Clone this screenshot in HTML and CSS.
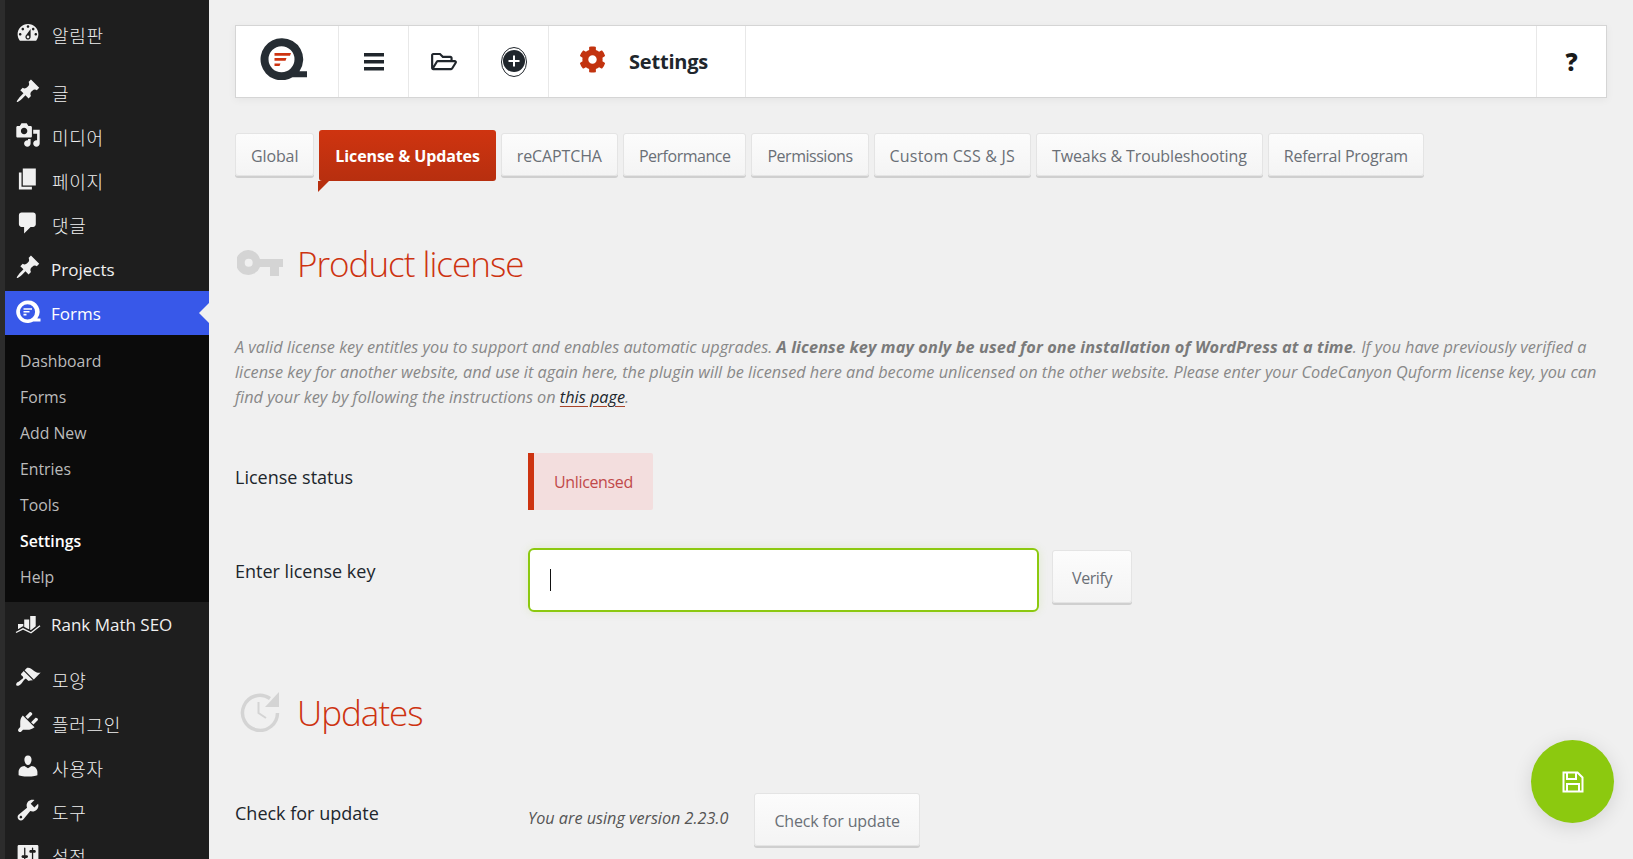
FILE: index.html
```html
<!DOCTYPE html>
<html lang="ko">
<head>
    <meta charset="UTF-8">
    <meta name="viewport" content="width=device-width, initial-scale=1.0">
    <title>Settings - Forms</title>
    <link rel="stylesheet" href="styles.css">
</head>
<body>
    <div class="edge"></div>

    <div class="sidebar">
        <a class="menu-item menu-sep"><svg class="menu-icon" viewBox="0 0 20 20"><path fill-rule="evenodd" d="M3.76 16h12.48c1.1-1.37 1.76-3.11 1.76-5 0-4.42-3.58-8-8-8s-8 3.58-8 8c0 1.89.66 3.63 1.76 5zM10 4c.55 0 1 .45 1 1s-.45 1-1 1-1-.45-1-1 .45-1 1-1zM6 6c.55 0 1 .45 1 1s-.45 1-1 1-1-.45-1-1 .45-1 1-1zm8 0c.55 0 1 .45 1 1s-.45 1-1 1-1-.45-1-1 .45-1 1-1zm-5.37 5.55L12 7v6c0 1.1-.9 2-2 2s-2-.9-2-2c0-.57.24-1.08.63-1.45zM4 10c.55 0 1 .45 1 1s-.45 1-1 1-1-.45-1-1 .45-1 1-1zm12 0c.55 0 1 .45 1 1s-.45 1-1 1-1-.45-1-1 .45-1 1-1zm-5 3c0-.55-.45-1-1-1s-1 .45-1 1 .45 1 1 1 1-.45 1-1z"/></svg><span class="ko">알림판</span></a>
        <a class="menu-item"><svg class="menu-icon" viewBox="0 0 20 20"><path d="M10.44 3.02l1.82-1.82 6.36 6.35-1.83 1.82c-1.05-.68-2.48-.57-3.41.36l-.75.75c-.92.93-1.04 2.35-.35 3.41l-1.83 1.82-2.41-2.41-2.8 2.79c-.42.42-3.38 2.71-3.8 2.29s1.86-3.39 2.28-3.81l2.79-2.79L4.1 9.36l1.83-1.82c1.05.69 2.48.57 3.4-.36l.75-.75c.93-.92 1.05-2.35.36-3.41z"/></svg><span class="ko">글</span></a>
        <a class="menu-item"><svg class="menu-icon" viewBox="0 0 20 20"><path fill-rule="evenodd" d="M13 11V4c0-.55-.45-1-1-1h-1.67L9 1H5L3.67 3H2c-.55 0-1 .45-1 1v7c0 .55.45 1 1 1h10c.55 0 1-.45 1-1zM7 4.5c1.38 0 2.5 1.12 2.5 2.5S8.38 9.5 7 9.5 4.5 8.38 4.5 7 5.62 4.5 7 4.5zM14 6h5v10.5c0 1.38-1.12 2.5-2.5 2.5S14 17.88 14 16.5s1.12-2.5 2.5-2.5c.17 0 .34.02.5.05V9h-3V6zm-4 8.05V13h2v3.5c0 1.38-1.12 2.5-2.5 2.5S7 17.88 7 16.5 8.12 14 9.5 14c.17 0 .34.02.5.05z"/></svg><span class="ko">미디어</span></a>
        <a class="menu-item"><svg class="menu-icon" viewBox="0 0 20 20"><path d="M6 15V2h10v13H6zm-1 1h8v2H3V5h2v11z"/></svg><span class="ko">페이지</span></a>
        <a class="menu-item"><svg class="menu-icon" viewBox="0 0 20 20"><path d="M5 2h9c1.1 0 2 .9 2 2v7c0 1.1-.9 2-2 2h-2l-5 5v-5H5c-1.1 0-2-.9-2-2V4c0-1.1.9-2 2-2z"/></svg><span class="ko">댓글</span></a>
        <a class="menu-item"><svg class="menu-icon" viewBox="0 0 20 20"><path d="M10.44 3.02l1.82-1.82 6.36 6.35-1.83 1.82c-1.05-.68-2.48-.57-3.41.36l-.75.75c-.92.93-1.04 2.35-.35 3.41l-1.83 1.82-2.41-2.41-2.8 2.79c-.42.42-3.38 2.71-3.8 2.29s1.86-3.39 2.28-3.81l2.79-2.79L4.1 9.36l1.83-1.82c1.05.69 2.48.57 3.4-.36l.75-.75c.93-.92 1.05-2.35.36-3.41z"/></svg>Projects</a>
        <a class="menu-item current">
            <svg class="menu-icon" viewBox="0 0 26 26"><path fill-rule="evenodd" d="M12.5 1.500a11.300 11.300 0 1 0 5.800 21H25.500v-3h-3.200A11.300 11.300 0 0 0 12.5 1.500zm0 3.700a7.600 7.600 0 1 1 0 15.200 7.600 7.600 0 0 1 0-15.200z"/><path d="M8.500 9.200h8.500v1.600H8.500zM8.500 12h6v1.600h-6zM8.500 14.800h3v1.600h-3z"/></svg>Forms
        </a>
        <div class="submenu">
            <a>Dashboard</a>
            <a>Forms</a>
            <a>Add New</a>
            <a>Entries</a>
            <a>Tools</a>
            <a class="on">Settings</a>
            <a>Help</a>
        </div>
        <a class="menu-item menu-sep-small"><svg class="menu-icon" viewBox="0 0 26 26"><path d="M3 15h5.300v5H3zM9.200 10.500h5v10h-5zM15.200 7h5.500v14h-5.500z"/><path fill="none" stroke="#1e1e1e" stroke-width="3" d="M2 22.500l6-3.500 8 4 9-7"/><path fill="none" stroke="#f0f0f0" stroke-width="1.400" d="M1 23.500l7-3.700 8 4 9-7"/></svg>Rank Math SEO</a>
        <a class="menu-item"><svg class="menu-icon" viewBox="0 0 20 20"><path d="M14.48 11.06L7.41 3.99l1.5-1.5c.5-.56 2.3-.47 3.51.32 1.21.8 1.43 1.28 2.91 2.1 1.18.64 2.45 1.26 4.45.85zm-.71.71L6.7 4.7 4.93 6.47c-.39.39-.39 1.02 0 1.41l1.06 1.06c.39.39.39 1.03 0 1.42-.6.6-1.43 1.11-2.21 1.69-.35.26-.7.53-1.01.84C1.43 13.23.4 14.89 1.2 15.7c.8.79 2.46-.23 3.78-1.55.31-.31.58-.66.85-1.02.57-.78 1.08-1.61 1.69-2.21.39-.39 1.02-.39 1.41 0l1.06 1.06c.39.39 1.02.39 1.41 0z"/></svg><span class="ko">모양</span></a>
        <a class="menu-item"><svg class="menu-icon" viewBox="0 0 20 20"><path d="M13.11 4.36L9.87 7.6 8 5.73l3.24-3.24c.35-.34 1.05-.2 1.56.32.52.51.66 1.21.31 1.55zm-8 1.77l.91-1.12 9.01 9.01-1.19.84c-.71.71-2.63 1.16-3.82 1.16H6.14L4.9 17.26c-.59.59-1.54.59-2.12 0-.59-.58-.59-1.53 0-2.12l1.24-1.24v-3.88c0-1.13.4-3.19 1.09-3.89zm7.26 3.97l3.24-3.24c.34-.35 1.04-.21 1.55.31.52.51.66 1.21.31 1.55l-3.24 3.25z"/></svg><span class="ko">플러그인</span></a>
        <a class="menu-item"><svg class="menu-icon" viewBox="0 0 20 20"><path d="M10 9.25c-2.27 0-2.73-3.44-2.73-3.44C7 4.02 7.82 2 9.97 2c2.16 0 2.98 2.02 2.71 3.81 0 0-.41 3.44-2.68 3.44zm0 2.57L12.72 10c2.39 0 4.52 2.33 4.52 4.53v2.49s-3.65 1.13-7.24 1.13c-3.65 0-7.24-1.13-7.24-1.13v-2.49c0-2.25 1.94-4.48 4.47-4.48z"/></svg><span class="ko">사용자</span></a>
        <a class="menu-item"><svg class="menu-icon" viewBox="0 0 20 20"><path fill-rule="evenodd" d="M16.68 9.77c-1.34 1.34-3.3 1.67-4.95.99l-5.41 6.52c-.99.99-2.59.99-3.58 0s-.99-2.59 0-3.57l6.52-5.42c-.68-1.65-.35-3.61.99-4.95 1.28-1.28 3.12-1.62 4.72-1.06l-2.89 2.89 2.82 2.82 2.86-2.87c.53 1.58.18 3.39-1.08 4.65zM3.81 16.21c.4.39 1.04.39 1.43 0 .4-.4.4-1.04 0-1.43-.39-.4-1.03-.4-1.43 0-.39.39-.39 1.03 0 1.43z"/></svg><span class="ko">도구</span></a>
        <a class="menu-item"><svg class="menu-icon" viewBox="0 0 20 20"><path fill-rule="evenodd" d="M18 16V4c0-.55-.45-1-1-1H3c-.55 0-1 .45-1 1v12c0 .55.45 1 1 1h14c.55 0 1-.45 1-1zM8 11h1c.55 0 1 .45 1 1s-.45 1-1 1H8v1.5c0 .28-.22.5-.5.5s-.5-.22-.5-.5V13H6c-.55 0-1-.45-1-1s.45-1 1-1h1V5.5c0-.28.22-.5.5-.5s.5.22.5.5V11zm5-2h-1c-.55 0-1-.45-1-1s.45-1 1-1h1V5.5c0-.28.22-.5.5-.5s.5.22.5.5V7h1c.55 0 1 .45 1 1s-.45 1-1 1h-1v5.5c0 .28-.22.5-.5.5s-.5-.22-.5-.5V9z"/></svg><span class="ko">설정</span></a>
    </div>

    <div class="main">
        <div class="topbar">
            <div class="bar-cell bar-logo">
                <svg class="logo" width="48" height="42" viewBox="0 0 48 42"><path fill="#262d33" fill-rule="evenodd" d="M22.5 .3a21 21 0 1 0 11 38.900H48v-6h-7.500A21 21 0 0 0 22.500 .3zm0 8a13 13 0 1 1 0 26 13 13 0 0 1 0-26z"/><path fill="#cd3310" d="M15.500 15H32l-1 2.800H15.500zM15.500 20H27.500l-1 2.700h-11zM15.500 25.500H21.500l-1 2.500h-5z"/></svg>
            </div>
            <div class="bar-cell bar-icon">
                <svg width="22" height="18" viewBox="0 0 22 18"><path fill="#20262c" d="M1 0h20v3.500H1zM1 7h20v3.500H1zM1 14h20v3.500H1z"/></svg>
            </div>
            <div class="bar-cell bar-icon">
                <svg width="26" height="23" viewBox="0 0 576 512"><path fill="#20262c" d="M527.900 224H480v-48c0-26.500-21.500-48-48-48H272l-64-64H48C21.500 64 0 85.500 0 112v288c0 26.500 21.500 48 48 48h400c16.500 0 31.900-8.500 40.700-22.600l79.900-128c20-31.900-3-73.400-40.700-73.400zM48 118c0-3.300 2.700-6 6-6h134.100l64 64H426c3.300 0 6 2.700 6 6v42H152c-16.800 0-32.400 8.800-41.100 23.200L48 351.400zm400 282H72l77.200-128H528z"/></svg>
            </div>
            <div class="bar-cell bar-icon">
                <svg width="28" height="32" viewBox="0 0 28 32"><ellipse cx="14" cy="16" rx="12.500" ry="14.500" fill="none" stroke="#20262c" stroke-width="1"/><circle cx="14" cy="15" r="11" fill="#20262c"/><path fill="#fff" d="M13 9.500h2V14h4.500v2H15v4.500h-2V16H8.500v-2H13z"/></svg>
            </div>
            <div class="bar-cell bar-title">
                <svg class="title-gear" width="27" height="27" viewBox="0 0 512 512"><path fill="#c2330f" d="M487.400 315.700l-42.600-24.600c4.300-23.200 4.300-47 0-70.200l42.600-24.600c4.900-2.800 7.100-8.600 5.500-14-11.100-35.600-30-67.800-54.700-94.600-3.800-4.100-10-5.100-14.800-2.300L380.800 110c-17.900-15.400-38.500-27.300-60.800-35.100V25.800c0-5.600-3.900-10.500-9.400-11.700-36.700-8.200-74.300-7.800-109.200 0-5.500 1.200-9.400 6.100-9.400 11.700V75c-22.200 7.900-42.800 19.800-60.800 35.100L88.700 85.500c-4.900-2.800-11-1.900-14.800 2.300-24.700 26.700-43.600 58.900-54.700 94.600-1.700 5.400.6 11.200 5.500 14L67.300 221c-4.300 23.200-4.300 47 0 70.200l-42.600 24.600c-4.900 2.800-7.100 8.600-5.500 14 11.100 35.600 30 67.800 54.700 94.600 3.800 4.100 10 5.100 14.800 2.300l42.600-24.600c17.900 15.400 38.500 27.300 60.800 35.100v49.200c0 5.600 3.900 10.500 9.400 11.700 36.700 8.200 74.300 7.800 109.200 0 5.500-1.200 9.400-6.100 9.400-11.700v-49.200c22.200-7.900 42.800-19.800 60.800-35.100l42.600 24.600c4.900 2.800 11 1.900 14.800-2.300 24.700-26.700 43.600-58.900 54.700-94.600 1.500-5.500-.7-11.300-5.600-14.100zM256 336c-44.100 0-80-35.900-80-80s35.900-80 80-80 80 35.900 80 80-35.900 80-80 80z"/></svg>
                <span>Settings</span>
            </div>
            <div class="bar-space"></div>
            <div class="bar-cell bar-help">?</div>
        </div>

        <div class="tabs">
            <a class="tab">Global</a>
            <a class="tab active">License &amp; Updates</a>
            <a class="tab">reCAPTCHA</a>
            <a class="tab tab-tight">Performance</a>
            <a class="tab tab-tight">Permissions</a>
            <a class="tab tab-wide">Custom CSS &amp; JS</a>
            <a class="tab">Tweaks &amp; Troubleshooting</a>
            <a class="tab tab-last">Referral Program</a>
        </div>

        <h2 class="section-title title-license">
            <svg class="section-icon" width="46" height="26" viewBox="0 0 46 26"><path fill="#d4d4d4" fill-rule="evenodd" d="M11.700 0a12.500 12.500 0 0 1 11.300 9h23v8h-4v9h-9v-9H23a12.500 12.500 0 1 1-11.300-17zm0 8.700a4 4 0 1 0 0 8 4 4 0 0 0 0-8z"/></svg>
            Product license
        </h2>

        <p class="license-desc">A valid license key entitles you to support and enables automatic upgrades. <b>A license key may only be used for one installation of WordPress at a time</b>. If you have previously verified a<br>license key for another website, and use it again here, the plugin will be licensed here and become unlicensed on the other website. Please enter your CodeCanyon Quform license key, you can<br>find your key by following the instructions on <a href="#">this page</a>.</p>

        <div class="form-row row-status">
            <label>License status</label>
            <div class="status-box">Unlicensed</div>
        </div>

        <div class="form-row row-key">
            <label>Enter license key</label>
            <div class="key-input"><span class="caret"></span></div>
            <a class="btn btn-verify">Verify</a>
        </div>

        <h2 class="section-title title-updates">
            <svg class="section-icon icon-update" width="40" height="40" viewBox="0 0 40 40"><path fill="none" stroke="#d4d4d4" stroke-width="3.500" d="M30 6.500A17.500 17.500 0 1 0 37.500 21"/><path fill="#d4d4d4" d="M39 0v15H25z"/><path fill="none" stroke="#d4d4d4" stroke-width="2" d="M18.500 10v11l7.500 5"/></svg>
            Updates
        </h2>

        <div class="form-row row-update">
            <label>Check for update</label>
            <span class="version">You are using version 2.23.0</span>
            <a class="btn btn-update">Check for update</a>
        </div>
    </div>

    <a class="save-fab">
        <svg width="22" height="22" viewBox="0 0 22 22"><path fill="none" stroke="#fff" stroke-width="2" d="M1.500 1.500h14l5 5v14h-19zM5 2v6h9V2M5 20.500V13h12v7.500"/></svg>
    </a>
</body>
</html>
```

FILE: styles.css
```css
* {
    box-sizing: border-box;
    margin: 0;
    padding: 0;
}
html, body {
    height: 100%;
    overflow: hidden;
}
body {
    display: flex;
    font-family: "Open Sans", "Noto Sans CJK KR", sans-serif;
    font-size: 16px;
    background-color: #f0f0f0;
    color: #20262c;
}
.edge {
    width: 5px;
    background-color: #2c2c2c;
}

/* left menu */
.sidebar {
    width: 204px;
    flex-shrink: 0;
    padding-top: 13px;
    background-color: #1e1e1e;
}
.menu-item {
    display: flex;
    align-items: center;
    position: relative;
    height: 44px;
    padding-left: 46px;
    color: #f0f0f0;
    font-size: 17px;
}
.menu-item .ko {
    padding-left: 1px;
    font-size: 18px;
    font-weight: 300;
    letter-spacing: 0.7px;
}
.menu-sep {
    margin-bottom: 14px;
}
.menu-sep-small {
    margin-bottom: 12px;
}
.menu-icon {
    position: absolute;
    left: 10px;
    top: 7px;
    width: 26px;
    height: 26px;
    fill: #f0f0f0;
}
.menu-item.current {
    background-color: #3858e9;
    color: #fff;
}
.menu-item.current .menu-icon {
    top: 8px;
    fill: #fff;
}
.menu-item.current::after {
    content: "";
    position: absolute;
    right: 0;
    top: 12px;
    border: 10px solid transparent;
    border-left: 0;
    border-right-color: #f0f0f0;
}
.submenu {
    height: 267px;
    padding: 8px 0 7px;
    background-color: #0b0b0b;
}
.submenu a {
    display: block;
    height: 36px;
    padding-left: 15px;
    line-height: 36px;
    color: #bbb;
    font-size: 15.8px;
}
.submenu a.on {
    color: #fff;
    font-weight: 600;
}

/* content */
.main {
    flex: 1;
    padding: 25px 26px 0 26px;
}
.topbar {
    display: flex;
    height: 73px;
    background-color: #fff;
    border: 1px solid #d5d5d5;
    box-shadow: 0 2px 8px rgba(0,0,0,0.05);
}
.bar-cell {
    display: flex;
    align-items: center;
    justify-content: center;
    border-right: 1px solid #e8e8e8;
}
.bar-logo {
    width: 103px;
    justify-content: flex-start;
    padding-left: 23px;
}
.logo {
    margin-top: -5px;
}
.bar-icon {
    width: 70px;
}
.bar-title {
    width: 197px;
    justify-content: flex-start;
    padding-left: 30px;
    font-size: 20px;
    font-weight: 700;
    letter-spacing: -0.2px;
}
.title-gear {
    margin-right: 23px;
    margin-top: -5px;
}
.bar-space {
    flex: 1;
    border-right: 1px solid #e8e8e8;
}
.bar-help {
    width: 69px;
    border-right: 0;
    font-size: 24px;
    font-weight: 800;
    color: #1a1a1a;
}

.tabs {
    display: flex;
    align-items: flex-start;
    gap: 5px;
    height: 62px;
    margin-top: 32px;
}
.tab {
    height: 43px;
    margin-top: 3px;
    padding: 0 15px;
    line-height: 44px;
    font-size: 16px;
    letter-spacing: -0.12px;
    color: #6a6f76;
    white-space: nowrap;
    background: linear-gradient(#fcfcfc, #f4f4f4);
    border: 1px solid #e4e4e4;
    border-radius: 3px;
    box-shadow: 0 2px 0 #cfcfcf;
}
.tab-tight {
    letter-spacing: -0.48px;
}
.tab-wide {
    letter-spacing: 0.2px;
}
.tab-last {
    letter-spacing: -0.25px;
}
.tab.active {
    position: relative;
    height: 51px;
    margin-top: 0;
    padding: 0 16px;
    line-height: 52px;
    font-weight: 700;
    letter-spacing: -0.1px;
    color: #fff;
    background: linear-gradient(#cf3410, #b72f0f);
    border: 0;
    box-shadow: none;
}
.tab.active::after {
    content: "";
    position: absolute;
    left: -1px;
    bottom: -11px;
    border-top: 11px solid #b72f0f;
    border-right: 11px solid transparent;
}

.section-title {
    display: flex;
    align-items: center;
    height: 48px;
    font-size: 35px;
    font-weight: 300;
    letter-spacing: -1px;
    color: #cd3310;
}
.section-icon {
    flex-shrink: 0;
    margin-left: 2px;
    margin-right: 14px;
}
.icon-update {
    margin-left: 5px;
    margin-right: 17px;
}
.title-license {
    margin-top: 47px;
}
.title-updates {
    margin-top: 76px;
}
.license-desc {
    margin-top: 48px;
    line-height: 25px;
    font-size: 16.25px;
    font-style: italic;
    color: #888;
    white-space: nowrap;
}
.license-desc b {
    font-weight: 700;
    letter-spacing: 0.12px;
    color: #7a7a7a;
}
.license-desc a {
    color: #20262c;
    text-decoration: underline;
    text-decoration-color: #a8452a;
    text-underline-offset: 3px;
}

.form-row {
    display: flex;
    align-items: flex-start;
}
.form-row label {
    width: 293px;
    flex-shrink: 0;
    line-height: 24px;
    font-size: 18px;
}
.row-status {
    margin-top: 43px;
}
.row-status label {
    padding-top: 12px;
}
.row-key label {
    padding-top: 11px;
}
.status-box {
    width: 125px;
    height: 57px;
    padding: 17px 0 0 20px;
    line-height: 24px;
    font-size: 16px;
    letter-spacing: -0.35px;
    color: #c1494a;
    background-color: #f3dede;
    border-left: 6px solid #cd3310;
    border-radius: 0 2px 2px 0;
}
.row-key {
    margin-top: 38px;
}
.key-input {
    width: 511px;
    height: 64px;
    padding: 19px 0 0 20px;
    background-color: #fff;
    border: 2px solid #8cc90f;
    border-radius: 6px;
    box-shadow: 0 0 10px rgba(140,201,15,0.15);
}
.caret {
    display: block;
    width: 1px;
    height: 22px;
    background-color: #111;
}
.btn {
    display: block;
    height: 53px;
    padding: 0 19px;
    line-height: 54px;
    font-size: 16px;
    letter-spacing: -0.15px;
    color: #6a6f76;
    background: linear-gradient(#fcfcfc, #f4f4f4);
    border: 1px solid #e4e4e4;
    border-radius: 3px;
    box-shadow: 0 2px 0 #cfcfcf;
    white-space: nowrap;
}
.btn-verify {
    margin: 2px 0 0 13px;
    padding: 0 19px;
    letter-spacing: -0.4px;
}
.row-update {
    margin-top: 57px;
}
.row-update label {
    padding-top: 8px;
}
.version {
    margin: 13px 26px 0 0;
    line-height: 24px;
    font-size: 16.2px;
    font-style: italic;
    color: #555;
}

.save-fab {
    position: absolute;
    left: 1531px;
    top: 740px;
    display: flex;
    align-items: center;
    justify-content: center;
    width: 83px;
    height: 83px;
    background-color: #8cc90f;
    border-radius: 50%;
    box-shadow: 0 4px 20px rgba(0,0,0,0.12);
}
```
